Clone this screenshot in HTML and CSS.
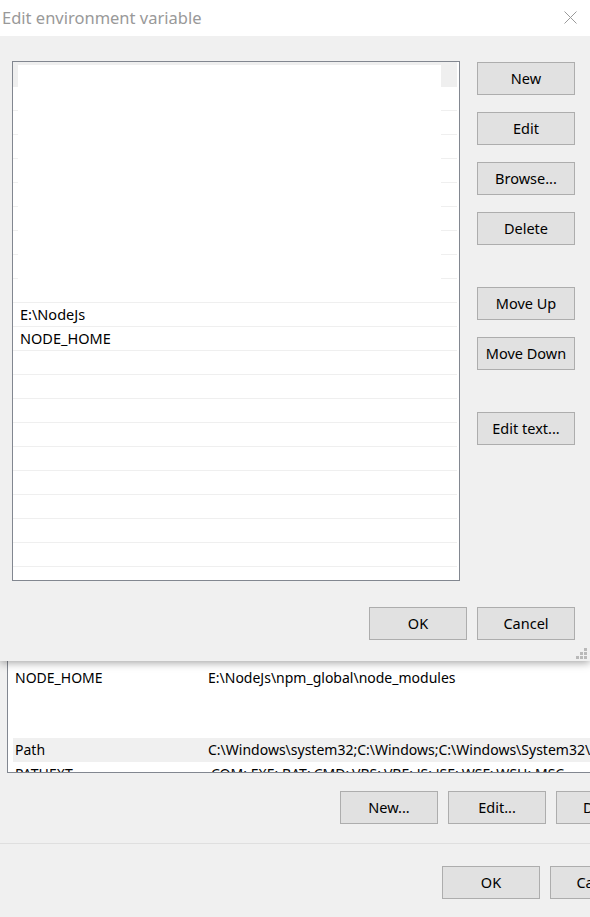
FILE: index.html
```html
<!DOCTYPE html>
<html>
<head>
<meta charset="utf-8">
<link rel="stylesheet" href="styles.css">
</head>
<body>
<div class="parent">
  <div class="envlist">
    <div class="erow"><span class="c1">NODE_HOME</span><span class="c2">E:\NodeJs\npm_global\node_modules</span></div>
    <div class="erow"></div>
    <div class="erow"></div>
    <div class="erow sel"><span class="c1">Path</span><span class="c2">C:\Windows\system32;C:\Windows;C:\Windows\System32\Wbem;C:\Windows\System32\WindowsPowerShell\v1.0\</span></div>
    <div class="erow"><span class="c1">PATHEXT</span><span class="c2">.COM;.EXE;.BAT;.CMD;.VBS;.VBE;.JS;.JSE;.WSF;.WSH;.MSC</span></div>
  </div>
  <div class="pbtns">
    <div class="btn">New...</div>
    <div class="btn">Edit...</div>
    <div class="btn">Delete</div>
  </div>
  <div class="psep"></div>
  <div class="pfoot">
    <div class="btn">OK</div>
    <div class="btn">Cancel</div>
  </div>
</div>

<div class="dialog">
  <div class="titlebar">
    <span class="title">Edit environment variable</span>
    <svg class="close" width="13" height="13" viewBox="0 0 13 13"><path d="M0.5 0.5 L12.5 12.5 M12.5 0.5 L0.5 12.5" stroke="#9a9a9a" stroke-width="1" fill="none"/></svg>
  </div>
  <div class="dbody">
    <div class="dmain">
      <div class="vlist">
        <div class="vrow active"></div>
        <div class="vrow"></div>
        <div class="vrow"></div>
        <div class="vrow"></div>
        <div class="vrow"></div>
        <div class="vrow"></div>
        <div class="vrow"></div>
        <div class="vrow"></div>
        <div class="vrow"></div>
        <div class="vrow"></div>
        <div class="vrow">E:\NodeJs</div>
        <div class="vrow">NODE_HOME</div>
        <div class="vrow"></div>
        <div class="vrow"></div>
        <div class="vrow"></div>
        <div class="vrow"></div>
        <div class="vrow"></div>
        <div class="vrow"></div>
        <div class="vrow"></div>
        <div class="vrow"></div>
        <div class="vrow"></div>
        <div class="editor"></div>
      </div>
      <div class="side">
        <div class="btn">New</div>
        <div class="btn">Edit</div>
        <div class="btn">Browse...</div>
        <div class="btn">Delete</div>
        <div class="btn g1">Move Up</div>
        <div class="btn">Move Down</div>
        <div class="btn g2">Edit text...</div>
      </div>
    </div>
    <div class="dfoot">
      <div class="btn">OK</div>
      <div class="btn">Cancel</div>
    </div>
    <svg class="grip" width="11" height="11" viewBox="0 0 11 11">
      <rect x="8" y="0" width="3" height="3" fill="#b9b9b9"/>
      <rect x="4" y="4" width="3" height="3" fill="#b9b9b9"/>
      <rect x="8" y="4" width="3" height="3" fill="#b9b9b9"/>
      <rect x="0" y="8" width="3" height="3" fill="#b9b9b9"/>
      <rect x="4" y="8" width="3" height="3" fill="#b9b9b9"/>
      <rect x="8" y="8" width="3" height="3" fill="#b9b9b9"/>
    </svg>
  </div>
</div>
</body>
</html>
```

FILE: styles.css
```css
html, body {
  margin: 0;
  padding: 0;
  overflow: hidden;
  width: 590px;
  height: 917px;
  background: #f0f0f0;
  font-family: "Noto Sans", "Open Sans", sans-serif;
  font-size: 14px;
  color: #000;
}

.btn {
  box-sizing: border-box;
  width: 98px;
  height: 33px;
  flex: none;
  background: #e1e1e1;
  border: 1px solid #adadad;
  display: flex;
  align-items: center;
  justify-content: center;
  padding-bottom: 2px;
  font-size: 14.5px;
  color: #000;
  white-space: nowrap;
}

/* parent window */
.parent {
  position: relative;
  width: 700px;
}
.envlist {
  box-sizing: border-box;
  margin-left: 7px;
  width: 693px;
  height: 773px;
  padding-top: 666px;
  background: #fff;
  border-left: 1px solid #828790;
  border-bottom: 1px solid #828790;
  overflow: hidden;
}
.erow {
  display: flex;
  align-items: center;
  height: 24px;
  margin-left: 5px;
  padding-left: 2px;
  padding-bottom: 1px;
  box-sizing: border-box;
  white-space: nowrap;
}
.erow.sel {
  background: #f0f0f0;
}
.c1 {
  width: 193px;
  flex: none;
}
.c2 {
  flex: none;
}
.pbtns {
  display: flex;
  gap: 10px;
  padding-left: 340px;
  margin-top: 18px;
}
.psep {
  height: 1px;
  background: #dfdfdf;
  margin-top: 19px;
}
.pfoot {
  display: flex;
  gap: 10px;
  padding-left: 442px;
  margin-top: 22px;
}

/* dialog overlay */
.dialog {
  position: absolute;
  top: 0;
  left: 0;
  width: 590px;
  height: 661px;
  background: #f0f0f0;
  box-shadow: 0 2px 8px rgba(0, 0, 0, 0.35);
}
.titlebar {
  height: 36px;
  background: #fff;
  display: flex;
  align-items: center;
  justify-content: space-between;
  padding: 0 13px 0 2px;
}
.title {
  font-size: 16.5px;
  color: #999;
  margin-top: -1px;
}
.close {
  display: block;
  margin-top: -2px;
}
.dbody {
  position: relative;
  height: 625px;
}
.dmain {
  display: flex;
  padding: 25px 0 0 12px;
  gap: 17px;
}
.vlist {
  position: relative;
  box-sizing: border-box;
  width: 448px;
  height: 520px;
  background: #fff;
  border: 1px solid #828790;
  display: flex;
  flex-direction: column;
  overflow: hidden;
}
.vrow {
  box-sizing: border-box;
  flex: none;
  height: 24px;
  margin-right: 2px;
  border-bottom: 1px solid #efefef;
  padding-left: 7px;
  padding-bottom: 1px;
  display: flex;
  align-items: center;
  font-size: 14.5px;
  white-space: nowrap;
}
.vrow.active {
  height: 25px;
  background: #efefef;
  border-bottom-color: #efefef;
}
.editor {
  position: absolute;
  left: 5px;
  top: 3px;
  width: 423px;
  height: 237px;
  background: #fff;
}
.side {
  display: flex;
  flex-direction: column;
  gap: 17px;
  padding-top: 1px;
}
.side .g1 {
  margin-top: 25px;
}
.side .g2 {
  margin-top: 25px;
}
.dfoot {
  display: flex;
  gap: 10px;
  padding-left: 369px;
  margin-top: 26px;
}
.grip {
  position: absolute;
  right: 3px;
  bottom: 2px;
}
```
